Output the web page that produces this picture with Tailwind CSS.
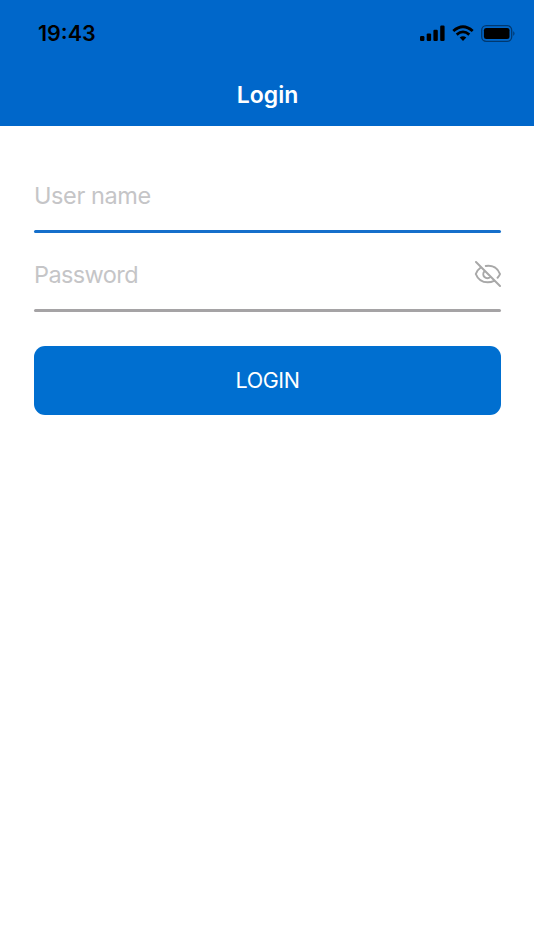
<!DOCTYPE html>
<html lang="en"><head><meta charset="utf-8"><title>Login</title><script src="https://cdn.jsdelivr.net/npm/@tailwindcss/browser@4"></script></head>
<body class="bg-white font-['Inter',sans-serif]">
<main class="w-full h-[950px] overflow-hidden">
<header class="h-[126px] bg-[#0067ca]">
<div class="h-[66px] pl-[38px] pr-[18.5px] flex items-center justify-between">
<span class="pt-[2px] text-[21.5px] font-semibold text-black leading-none">19:43</span>
<div class="flex items-center gap-[7px]">
<svg width="25" height="16" viewBox="0 0 25 16"><rect x="0" y="11" width="4.4" height="5" rx="1.2"/><rect x="6.7" y="8.4" width="4.4" height="7.6" rx="1.2"/><rect x="13.4" y="4.7" width="4.4" height="11.3" rx="1.2"/><rect x="20.2" y=".5" width="4.4" height="15.5" rx="1.2"/></svg>
<svg width="22" height="16" viewBox="0 0 22 16"><path d="M11 16L7.7 12.6Q11 10 14.3 12.6Z"/><path d="M4.7 9.6Q11 4.2 17.3 9.6M1.3 6Q11-2.5 20.7 6" fill="none" stroke="#000" stroke-width="2.8"/></svg>
<svg width="35" height="17" viewBox="0 0 35 17"><rect x=".7" y=".7" width="30" height="15.6" rx="4.5" fill="none" stroke="#000" stroke-opacity=".45" stroke-width="1.3"/><rect x="2.9" y="2.9" width="25.6" height="11.2" rx="2.4"/><path d="M32.3 6Q34.7 8.5 32.3 11Z" fill-opacity=".5"/></svg>
</div></div>
<h1 class="pt-[14px] pl-px text-center text-white text-[23px] font-semibold leading-[30px]">Login</h1>
</header>
<form class="pl-[34px] pr-[33px]">
<div class="h-[104px] pt-[51px] text-[#c5c5c7] text-[23.5px] leading-[38px] tracking-[-0.4px]">User name</div>
<div class="h-[3px] rounded-full bg-[#156fcb]"></div>
<div class="h-[76px] pt-[23px] text-[#c5c5c7] text-[23.5px] leading-[38px] tracking-[-0.6px] flex justify-between"><span>Password</span>
<svg class="mt-[4px]" width="27" height="28" viewBox="0 0 27 28" fill="none" stroke="#a8a8a8" stroke-width="2" stroke-linecap="round"><path d="M2 2L26 26M6.2 8Q3.2 10 1.8 14C4 19.7 8.5 22.3 13.7 22.3Q17.3 22.3 20 20.9M11.8 5.9C18.8 4.8 24 8.3 26 14Q25.2 16.2 23.6 17.8M10.5 11.3A4 4 0 0 0 16.2 17"/></svg></div>
<div class="h-[3px] rounded-full bg-[#a5a3a5]"></div>
<button type="button" class="mt-[34px] block h-[69px] w-full rounded-[11px] bg-[#006fd0] text-white text-[21.5px] tracking-[-0.4px]">LOGIN</button>
</form>
</main></body></html>
